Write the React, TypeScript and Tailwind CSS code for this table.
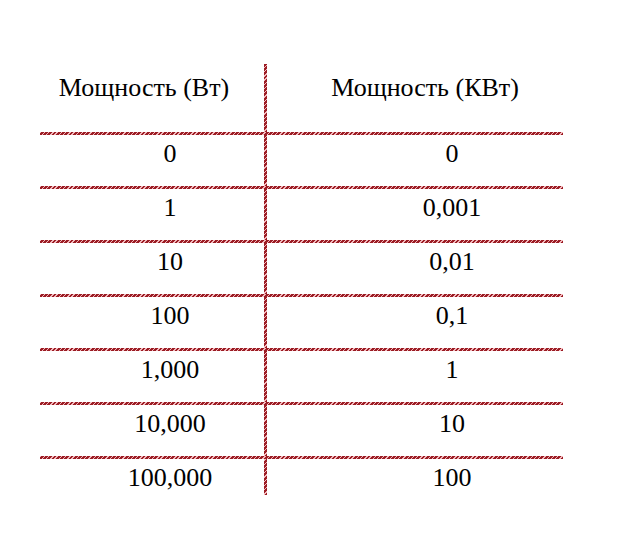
const rows: [string, string][] = [
  ["0", "0"],
  ["1", "0,001"],
  ["10", "0,01"],
  ["100", "0,1"],
  ["1,000", "1"],
  ["10,000", "10"],
  ["100,000", "100"],
];

const hatchH =
  "h-[3px] w-full bg-[repeating-linear-gradient(-45deg,#9b1c24_0px,#9b1c24_2px,#f2b8bc_2px,#f2b8bc_3px)]";
const hatchV =
  "w-[3px] shrink-0 self-stretch bg-[repeating-linear-gradient(-45deg,#9b1c24_0px,#9b1c24_2px,#f2b8bc_2px,#f2b8bc_3px)]";

function Line() {
  return <div className={hatchH} />;
}

export default function App() {
  return (
    <div className="min-h-[548px] w-[617px] bg-white pl-[40px] pt-[64px] text-[26px] text-black">
      <div className="flex w-[523px] flex-col font-['Liberation_Serif','Times_New_Roman','DejaVu_Serif',serif]">
        <div className="flex h-[68px]">
          <div className="w-[224px] pr-[16px] pt-[9px] text-center leading-[30px]">Мощность (Вт)</div>
          <div className={hatchV} />
          <div className="flex-1 pl-[20px] pt-[9px] text-center leading-[30px]">Мощность (КВт)</div>
        </div>
        {rows.map(([w, kw], i) => (
          <div key={w}>
            <Line />
            <div className={i === rows.length - 1 ? "flex h-[36px]" : "flex h-[51px]"}>
              <div className="w-[224px] pl-[36px] pt-[4px] text-center leading-[30px]">{w}</div>
              <div className={hatchV} />
              <div className="flex-1 pl-[74px] pt-[4px] text-center leading-[30px]">{kw}</div>
            </div>
          </div>
        ))}
      </div>
    </div>
  );
}
